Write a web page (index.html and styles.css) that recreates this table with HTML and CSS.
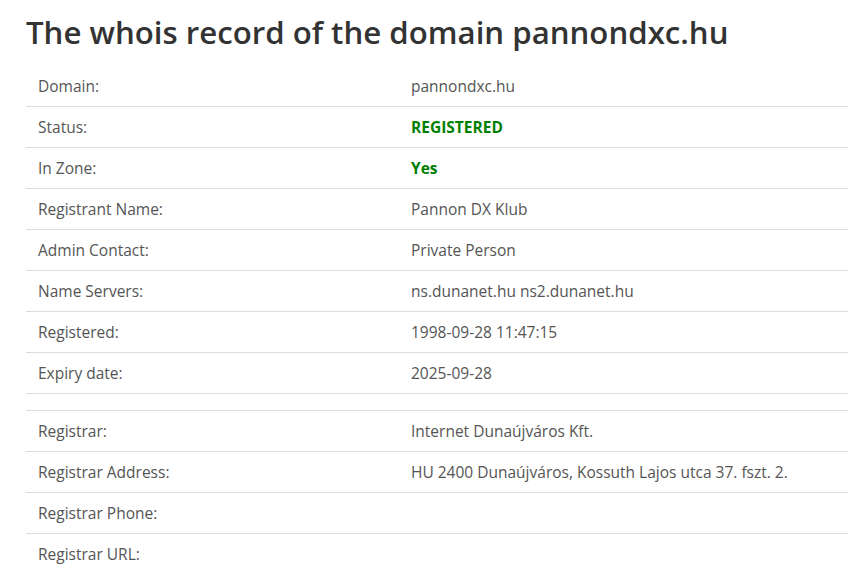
FILE: index.html
```html
<!DOCTYPE html>
<html>
<head>
<meta charset="utf-8">
<link rel="stylesheet" href="styles.css">
</head>
<body>
<div class="page">
  <h1 class="title">The whois record of the domain pannondxc.hu</h1>
  <table class="whois">
    <tr><td class="label">Domain:</td><td>pannondxc.hu</td></tr>
    <tr><td class="label">Status:</td><td class="ok">REGISTERED</td></tr>
    <tr><td class="label">In Zone:</td><td class="ok">Yes</td></tr>
    <tr><td class="label">Registrant Name:</td><td>Pannon DX Klub</td></tr>
    <tr><td class="label">Admin Contact:</td><td>Private Person</td></tr>
    <tr><td class="label">Name Servers:</td><td>ns.dunanet.hu ns2.dunanet.hu</td></tr>
    <tr><td class="label">Registered:</td><td>1998-09-28 11:47:15</td></tr>
    <tr><td class="label">Expiry date:</td><td>2025-09-28</td></tr>
    <tr class="spacer"><td></td><td></td></tr>
    <tr><td class="label">Registrar:</td><td>Internet Dunaújváros Kft.</td></tr>
    <tr><td class="label">Registrar Address:</td><td>HU 2400 Dunaújváros, Kossuth Lajos utca 37. fszt. 2.</td></tr>
    <tr><td class="label">Registrar Phone:</td><td></td></tr>
    <tr><td class="label">Registrar URL:</td><td></td></tr>
  </table>
</div>
</body>
</html>
```
FILE: styles.css
```css
html, body {
  margin: 0;
  padding: 0;
  background: #fff;
  overflow: hidden;
}
.page {
  padding-left: 26px;
  font-family: "Open Sans", "Liberation Sans", sans-serif;
  color: #555;
}
.title {
  margin: 0;
  padding-top: 12px;
  height: 66px;
  box-sizing: border-box;
  font-size: 31.2px;
  line-height: 40px;
  font-weight: 600;
  color: #333;
  white-space: nowrap;
}
.whois {
  width: 100%;
  border-collapse: collapse;
  font-size: 15.5px;
}
.whois td {
  height: 40px;
  padding: 0 12px;
  vertical-align: middle;
  border-bottom: 1px solid #ddd;
}
.whois td.label {
  width: 349px;
}
.whois td.ok {
  color: #008000;
  font-weight: 700;
}
.whois tr.spacer td {
  height: 16px;
}
.whois tr:last-child td {
  border-bottom: none;
}
```
